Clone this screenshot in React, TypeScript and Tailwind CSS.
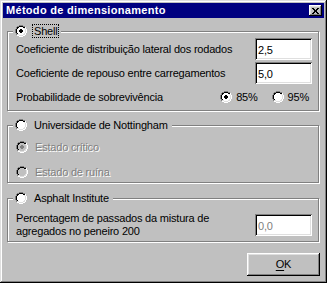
import type { ReactNode } from 'react'
import clsx from 'clsx'

// classic 12x12 option button, drawn pixel by pixel
const RADIO_MAP = [
  '....GGGG....',
  '..GGKKKKGG..',
  '.GKKFFFFKKW.',
  '.GKFFFFFFLW.',
  'GKFFFFFFFFLW',
  'GKFFFFFFFFLW',
  'GKFFFFFFFFLW',
  'GKFFFFFFFFLW',
  '.GKFFFFFFLW.',
  '.GLLFFFFLLW.',
  '..WWLLLLWW..',
  '....WWWW....',
]

const DOT_MAP = ['.KK.', 'KKKK', 'KKKK', '.KK.']

const CLOSE_MAP = ['KK...KK', '.KK.KK.', '..KKK..', '..KKK..', '.KK.KK.', 'KK...KK']

function Pixels({ rows, colors, ox = 0, oy = 0 }: { rows: string[]; colors: Record<string, string>; ox?: number; oy?: number }) {
  return (
    <>
      {rows.flatMap((row, y) =>
        row.split('').map((c, x) =>
          c === '.' ? null : <rect key={`${x}-${y}`} x={x + ox} y={y + oy} width={1} height={1} fill={colors[c]} />
        )
      )}
    </>
  )
}

function Radio({ checked, disabled }: { checked?: boolean; disabled?: boolean }) {
  const colors = { G: '#808080', K: '#000000', W: '#ffffff', L: '#dfdfdf', F: disabled ? '#c0c0c0' : '#ffffff' }
  return (
    <svg width={12} height={12} shapeRendering="crispEdges" className="shrink-0">
      <Pixels rows={RADIO_MAP} colors={colors} />
      {checked && <Pixels rows={DOT_MAP} colors={{ K: disabled ? '#808080' : '#000000' }} ox={4} oy={4} />}
    </svg>
  )
}

interface OptionProps {
  checked?: boolean
  disabled?: boolean
  focused?: boolean
  children: ReactNode
}

function Option({ checked, disabled, focused, children }: OptionProps) {
  return (
    <div className="flex items-center">
      <Radio checked={checked} disabled={disabled} />
      <span
        className={clsx(
          'ml-[5px] px-[1px] border border-dotted leading-[12px]',
          focused ? 'border-black' : 'border-transparent',
          disabled && 'text-[#808080] [text-shadow:1px_1px_0_#fff]'
        )}
      >
        {children}
      </span>
    </div>
  )
}

function TextBox({ value, disabled }: { value: string; disabled?: boolean }) {
  return (
    <div className="w-[57px] h-[22px] shrink-0 bg-white flex items-center pl-[3px] pt-[2px] shadow-[inset_1px_1px_#808080,inset_-1px_-1px_#fff,inset_2px_2px_#000,inset_-2px_-2px_#dfdfdf]">
      <span className={disabled ? 'text-[#808080]' : 'text-black'}>{value}</span>
    </div>
  )
}

function GroupBox({ legend, className, children }: { legend: ReactNode; className?: string; children: ReactNode }) {
  return (
    <fieldset
      className={clsx(
        'ml-[4px] w-[312px] border border-[#808080] shadow-[inset_1px_1px_#fff,1px_1px_#fff] pl-[5px] pr-[6px]',
        className
      )}
    >
      <legend className="h-[14px] px-[2px] bg-[#c0c0c0] flex items-center">{legend}</legend>
      {children}
    </fieldset>
  )
}

export default function App() {
  return (
    <div className="w-[327px] h-[283px] bg-[#c0c0c0] p-[3px] flex flex-col font-['Liberation_Sans',Arial,sans-serif] text-[11px] leading-[13px] tracking-[-0.2px] text-black shadow-[inset_-1px_-1px_#000,inset_1px_1px_#dfdfdf,inset_-2px_-2px_#808080,inset_2px_2px_#fff]">
      <div className="h-[15px] bg-[#000080] flex items-center justify-between pl-[3px] pr-[2px]">
        <span className="text-white font-bold tracking-[0.3px]">Método de dimensionamento</span>
        <div className="w-[13px] h-[11px] bg-[#c0c0c0] shadow-[inset_-1px_-1px_#000,inset_1px_1px_#fff,inset_-2px_-2px_#808080,inset_2px_2px_#dfdfdf]">
          <svg width={13} height={11} shapeRendering="crispEdges">
            <Pixels rows={CLOSE_MAP} colors={{ K: '#000000' }} ox={3} oy={3} />
          </svg>
        </div>
      </div>

      <GroupBox className="mt-[6px]" legend={<Option checked focused>Shell</Option>}>
        <div className="pl-[3px] flex flex-col">
          <div className="h-[22px] flex items-center justify-between">
            <span>Coeficiente de distribuição lateral dos rodados</span>
            <TextBox value="2,5" />
          </div>
          <div className="mt-[2px] h-[22px] flex items-center justify-between">
            <span>Coeficiente de repouso entre carregamentos</span>
            <TextBox value="5,0" />
          </div>
          <div className="h-[26px] flex items-center">
            <span className="flex-1">Probabilidade de sobrevivência</span>
            <Radio checked />
            <span className="ml-[4px]">85%</span>
            <div className="ml-[14px]">
              <Radio />
            </div>
            <span className="ml-[4px] mr-[3px]">95%</span>
          </div>
        </div>
      </GroupBox>

      <GroupBox className="mt-[7px]" legend={<Option>Universidade de Nottingham</Option>}>
        <div className="pl-[3px] pt-[7px] pb-[2px] flex flex-col gap-[9px]">
          <div className="h-[16px] flex items-center">
            <Option checked disabled>Estado crítico</Option>
          </div>
          <div className="h-[16px] flex items-center">
            <Option disabled>Estado de ruína</Option>
          </div>
        </div>
      </GroupBox>

      <GroupBox className="mt-[8px]" legend={<Option>Asphalt Institute</Option>}>
        <div className="pl-[3px] pt-[7px] pb-[3px]">
          <div className="h-[26px] flex items-center justify-between">
            <span>
              Percentagem de passados da mistura de
              <br />
              agregados no peneiro 200
            </span>
            <TextBox value="0,0" disabled />
          </div>
        </div>
      </GroupBox>

      <div className="mt-[11px] flex justify-end mr-[4px]">
        <button className="w-[73px] h-[23px] bg-[#c0c0c0] flex items-center justify-center shadow-[inset_-1px_-1px_#000,inset_1px_1px_#fff,inset_-2px_-2px_#808080,inset_2px_2px_#dfdfdf]">
          <span>
            <span className="underline underline-offset-[2px]">O</span>K
          </span>
        </button>
      </div>
    </div>
  )
}
